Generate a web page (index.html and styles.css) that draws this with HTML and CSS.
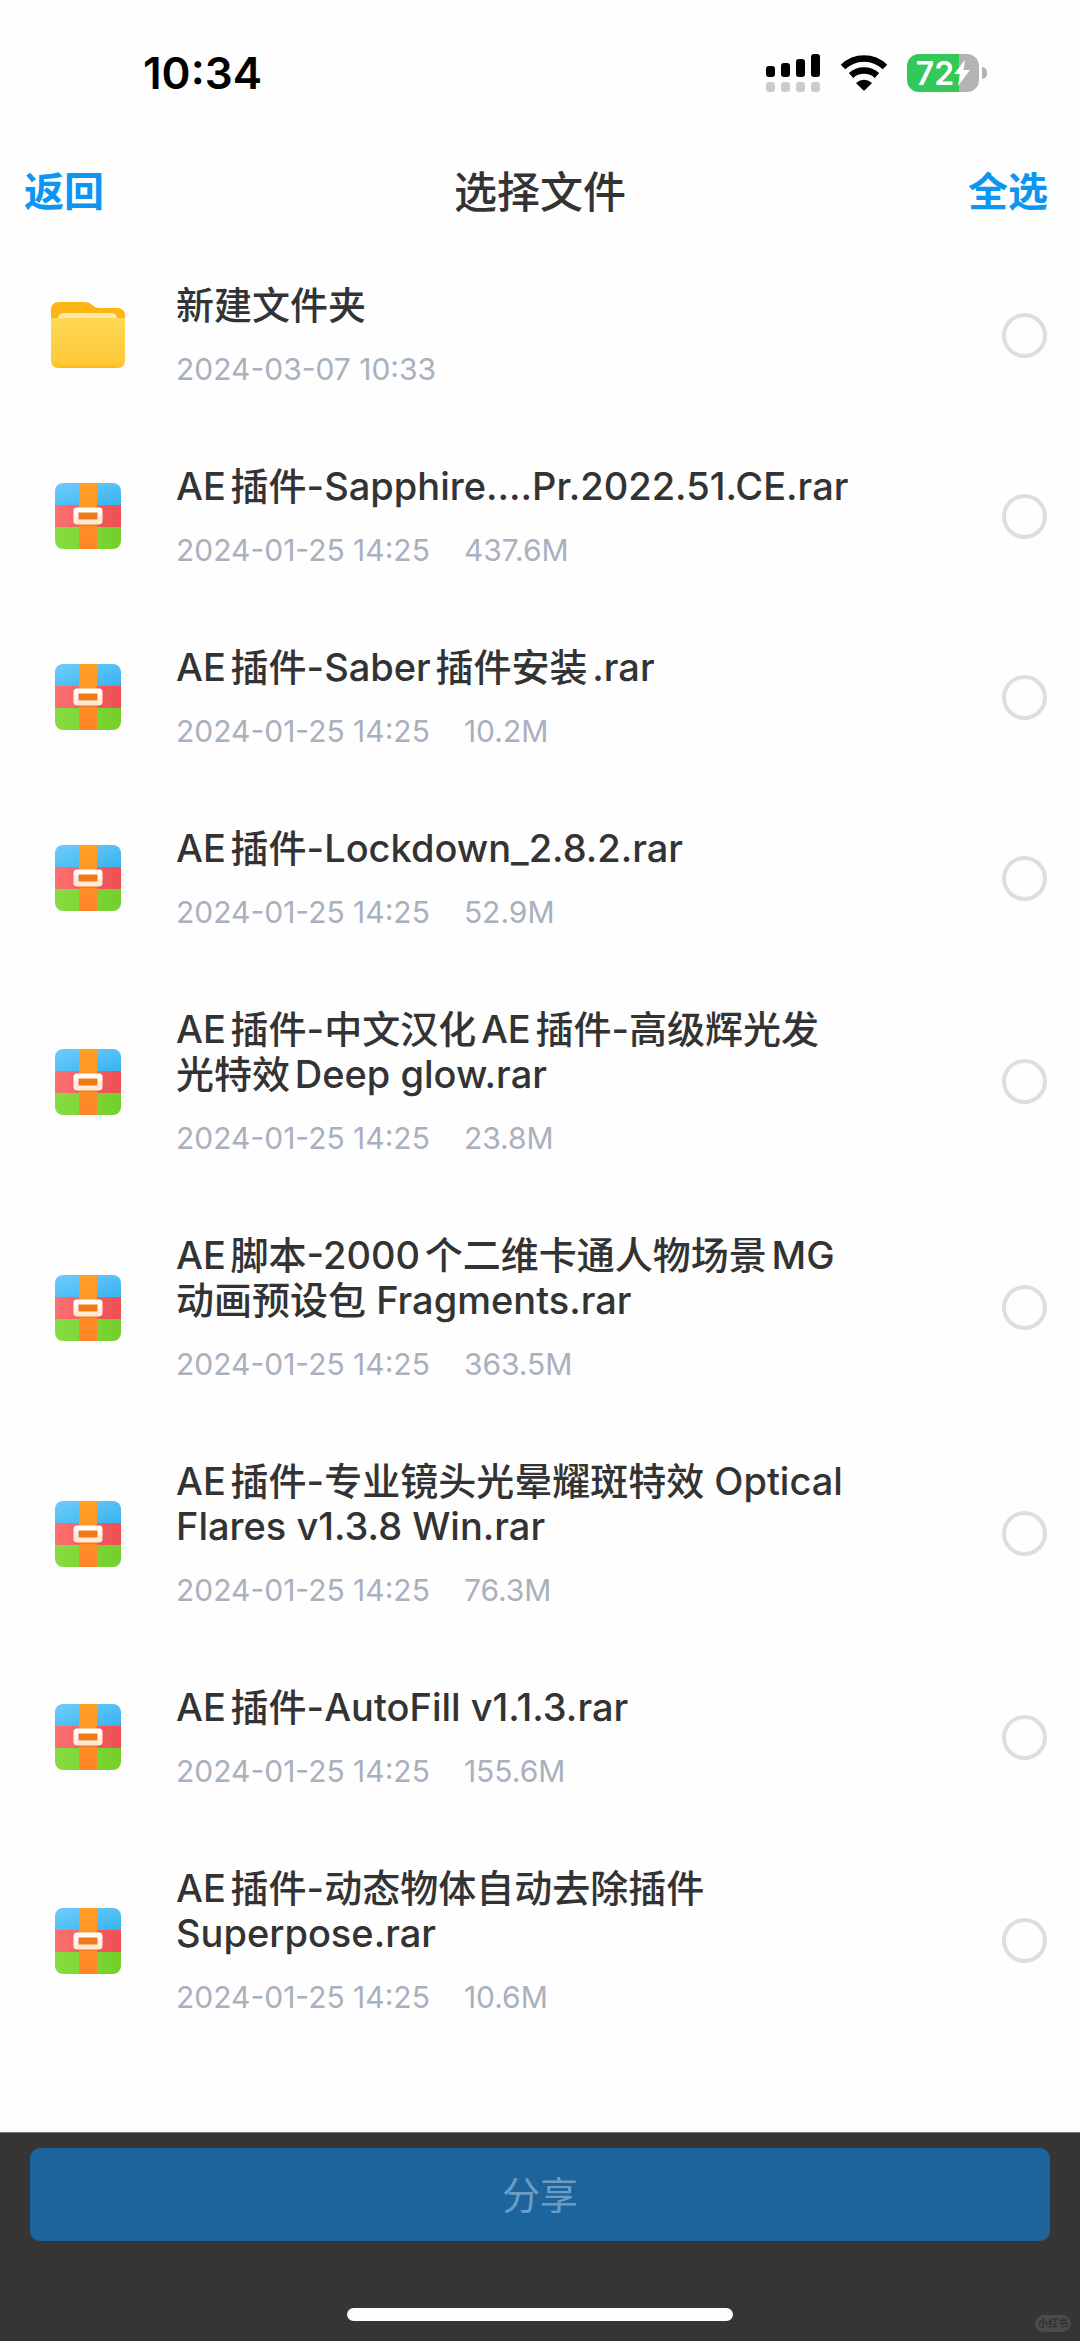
FILE: index.html
```
<!DOCTYPE html>
<html lang="zh-CN">
<head>
    <meta charset="UTF-8">
    <meta name="viewport" content="width=device-width, initial-scale=1.0">
    <title>选择文件</title>
    <link rel="stylesheet" href="styles.css">
</head>
<body>
    <!-- Shared icon shapes -->
    <svg class="sprite" aria-hidden="true">
        <defs>
            <linearGradient id="sky" x1="0" y1="0" x2="1" y2="1">
                <stop offset="0" stop-color="#6fcdfb"/>
                <stop offset="1" stop-color="#37b2ef"/>
            </linearGradient>
            <linearGradient id="red" x1="0" y1="0" x2="1" y2="0">
                <stop offset="0" stop-color="#fb7072"/>
                <stop offset="1" stop-color="#ee4f52"/>
            </linearGradient>
            <linearGradient id="green" x1="0" y1="0" x2="1" y2="0">
                <stop offset="0" stop-color="#86dc41"/>
                <stop offset="1" stop-color="#74cf2b"/>
            </linearGradient>
            <linearGradient id="belt" x1="0" y1="0" x2="0" y2="1">
                <stop offset="0" stop-color="#ffa024"/>
                <stop offset="1" stop-color="#ff8428"/>
            </linearGradient>
            <linearGradient id="buckle" x1="0" y1="0" x2="0" y2="1">
                <stop offset="0" stop-color="#ffffff"/>
                <stop offset="1" stop-color="#ffe9d2"/>
            </linearGradient>
            <linearGradient id="folderFront" x1="0" y1="0" x2="0" y2="1">
                <stop offset="0" stop-color="#ffd955"/>
                <stop offset="0.9" stop-color="#fec937"/>
                <stop offset="1" stop-color="#fbb913"/>
            </linearGradient>
            <clipPath id="zipShape">
                <rect width="66" height="66" rx="8"/>
            </clipPath>
        </defs>
        <symbol id="icon-zip" viewBox="0 0 66 66">
            <g clip-path="url(#zipShape)">
                <rect width="66" height="23" fill="url(#sky)"/>
                <rect y="22" width="66" height="22" fill="url(#red)"/>
                <rect y="44" width="66" height="22" fill="url(#green)"/>
                <rect x="24" width="18" height="66" fill="url(#belt)"/>
            </g>
            <rect x="19" y="26" width="29" height="17" rx="2" fill="#b84a20" opacity="0.25"/>
            <rect x="24" y="28" width="19" height="10" fill="#f07b16"/>
            <rect x="21" y="27" width="24" height="12" rx="1" fill="none" stroke="url(#buckle)" stroke-width="5"/>
        </symbol>
        <symbol id="icon-folder" viewBox="0 0 76 66">
            <path d="M1 18V8q0-8 8-8h26q4 0 6 2l4 3q2 1 5 1h17q8 0 8 8v4z" fill="#fdb515"/>
            <path d="M8 20v-3q0-6 6-6h48q5 0 5 6v3z" fill="#ffe9a8"/>
            <path d="M1 16h74v42q0 8-8 8H9q-8 0-8-8z" fill="url(#folderFront)"/>
        </symbol>
    </svg>

    <div class="page">
        <div class="status-bar">
            <span class="time">10:34</span>
            <div class="status-icons">
                <svg class="signal" width="55" height="38" viewBox="0 0 55 38" aria-hidden="true">
                    <g fill="#000">
                        <rect x="0" y="12" width="9" height="11" rx="3"/>
                        <rect x="15" y="9" width="9" height="14" rx="3"/>
                        <rect x="30" y="5" width="9" height="18" rx="3"/>
                        <rect x="45" y="0" width="9" height="23" rx="3"/>
                    </g>
                    <g fill="#cbcbcb">
                        <rect x="0" y="28" width="9" height="10" rx="3"/>
                        <rect x="15" y="28" width="9" height="10" rx="3"/>
                        <rect x="30" y="28" width="9" height="10" rx="3"/>
                        <rect x="45" y="28" width="9" height="10" rx="3"/>
                    </g>
                </svg>
                <svg class="wifi" width="48" height="36" viewBox="0 0 48 36" aria-hidden="true">
                    <path d="M3 12Q12 3.500 24 3.500T45 12" fill="none" stroke="#000" stroke-width="6.500"/>
                    <path d="M11 20.500Q16.500 15.500 24 15.500T37 20.500" fill="none" stroke="#000" stroke-width="6.500"/>
                    <path d="M16 28Q24 21.500 32 28L25 35Q24 36 23 35z" fill="#000"/>
                </svg>
                <div class="battery">
                    <span class="level">72</span>
                    <svg class="bolt" width="16" height="26" viewBox="0 0 16 26" aria-hidden="true">
                        <path d="M11 0 0 14h6L4 26 16 10H9.500z" fill="#fff"/>
                    </svg>
                </div>
            </div>
        </div>

        <header class="nav-bar">
            <a href="#" class="nav-link">返回</a>
            <h1>选择文件</h1>
            <a href="#" class="nav-link select-all">全选</a>
        </header>

        <ul class="file-list">
            <li class="file">
                <svg class="file-icon folder" aria-hidden="true"><use href="#icon-folder"/></svg>
                <label class="file-info" for="file1">
                    <span class="file-name">新建文件夹</span>
                    <span class="file-meta"><span>2024-03-07 10:33</span></span>
                </label>
                <input type="checkbox" id="file1">
            </li>
            <li class="file">
                <svg class="file-icon" aria-hidden="true"><use href="#icon-zip"/></svg>
                <label class="file-info" for="file2">
                    <span class="file-name">AE插件-Sapphire....Pr.2022.51.CE.rar</span>
                    <span class="file-meta"><span>2024-01-25 14:25</span><span>437.6M</span></span>
                </label>
                <input type="checkbox" id="file2">
            </li>
            <li class="file">
                <svg class="file-icon" aria-hidden="true"><use href="#icon-zip"/></svg>
                <label class="file-info" for="file3">
                    <span class="file-name">AE插件-Saber插件安装.rar</span>
                    <span class="file-meta"><span>2024-01-25 14:25</span><span>10.2M</span></span>
                </label>
                <input type="checkbox" id="file3">
            </li>
            <li class="file">
                <svg class="file-icon" aria-hidden="true"><use href="#icon-zip"/></svg>
                <label class="file-info" for="file4">
                    <span class="file-name">AE插件-Lockdown_2.8.2.rar</span>
                    <span class="file-meta"><span>2024-01-25 14:25</span><span>52.9M</span></span>
                </label>
                <input type="checkbox" id="file4">
            </li>
            <li class="file">
                <svg class="file-icon" aria-hidden="true"><use href="#icon-zip"/></svg>
                <label class="file-info" for="file5">
                    <span class="file-name">AE插件-中文汉化AE插件-高级辉光发光特效Deep glow.rar</span>
                    <span class="file-meta"><span>2024-01-25 14:25</span><span>23.8M</span></span>
                </label>
                <input type="checkbox" id="file5">
            </li>
            <li class="file">
                <svg class="file-icon" aria-hidden="true"><use href="#icon-zip"/></svg>
                <label class="file-info" for="file6">
                    <span class="file-name">AE脚本-2000个二维卡通人物场景MG动画预设包 Fragments.rar</span>
                    <span class="file-meta"><span>2024-01-25 14:25</span><span>363.5M</span></span>
                </label>
                <input type="checkbox" id="file6">
            </li>
            <li class="file">
                <svg class="file-icon" aria-hidden="true"><use href="#icon-zip"/></svg>
                <label class="file-info" for="file7">
                    <span class="file-name">AE插件-专业镜头光晕耀斑特效 Optical Flares v1.3.8 Win.rar</span>
                    <span class="file-meta"><span>2024-01-25 14:25</span><span>76.3M</span></span>
                </label>
                <input type="checkbox" id="file7">
            </li>
            <li class="file">
                <svg class="file-icon" aria-hidden="true"><use href="#icon-zip"/></svg>
                <label class="file-info" for="file8">
                    <span class="file-name">AE插件-AutoFill v1.1.3.rar</span>
                    <span class="file-meta"><span>2024-01-25 14:25</span><span>155.6M</span></span>
                </label>
                <input type="checkbox" id="file8">
            </li>
            <li class="file">
                <svg class="file-icon" aria-hidden="true"><use href="#icon-zip"/></svg>
                <label class="file-info" for="file9">
                    <span class="file-name">AE插件-动态物体自动去除插件Superpose.rar</span>
                    <span class="file-meta"><span>2024-01-25 14:25</span><span>10.6M</span></span>
                </label>
                <input type="checkbox" id="file9">
            </li>
        </ul>

        <footer class="bottom-bar">
            <button type="button" class="share-button" disabled>分享</button>
            <div class="home-indicator"></div>
            <span class="watermark">小红书</span>
        </footer>
    </div>
</body>
</html>
```
FILE: styles.css
```
/* General styles */
* {
    box-sizing: border-box;
}

body {
    margin: 0;
    font-family: Inter, "Noto Sans CJK SC", sans-serif;
    background-color: #fefefe;
    color: #333;
}

.sprite {
    position: absolute;
    width: 0;
    height: 0;
}

.page {
    display: flex;
    flex-direction: column;
    min-height: 100vh;
}

/* Status bar */
.status-bar {
    display: flex;
    justify-content: space-between;
    align-items: center;
    height: 146px;
    padding: 0 93px 0 143px;
    color: #000;
}

.time {
    font-size: 44px;
    font-weight: 600;
}

.status-icons {
    display: flex;
    align-items: center;
    gap: 19px;
}

.battery {
    position: relative;
    display: flex;
    align-items: center;
    justify-content: center;
    width: 72px;
    height: 38px;
    margin-right: 8px;
    border-radius: 12px;
    background: linear-gradient(to right, #34c759 72%, #b3b3b3 72%);
    color: #fff;
}

.battery::after {
    content: "";
    position: absolute;
    left: 75px;
    top: 13px;
    width: 5px;
    height: 12px;
    border-radius: 0 6px 6px 0;
    background-color: #b3b3b3;
}

.level {
    font-size: 32px;
    font-weight: 600;
}

/* Title bar */
.nav-bar {
    display: grid;
    grid-template-columns: 1fr auto 1fr;
    align-items: center;
    height: 86px;
    margin-bottom: 13px;
    padding: 0 24px;
}

.nav-bar h1 {
    margin: 0;
    font-size: 43px;
    font-weight: 500;
}

.nav-link {
    justify-self: start;
    color: #0d95f2;
    font-size: 40px;
    font-weight: 600;
    text-decoration: none;
}

.select-all {
    justify-self: end;
    margin-right: 8px;
}

/* File list */
.file-list {
    margin: 0;
    padding: 0;
    list-style: none;
}

.file {
    display: flex;
    align-items: center;
    padding: 38px 33px 39px 50px;
}

.file-icon {
    flex: none;
    width: 76px;
    height: 66px;
    margin-right: 50px;
}

.file-info {
    flex: 1;
    padding-right: 150px;
}

.file-name {
    display: block;
    font-size: 38px;
    font-weight: 500;
    line-height: 45px;
    text-autospace: normal;
}

.file-meta {
    display: flex;
    gap: 34px;
    margin-top: 23px;
    color: #a9b0be;
    font-size: 30px;
    line-height: 36px;
}

.file input {
    flex: none;
    appearance: none;
    width: 45px;
    height: 45px;
    margin: 0;
    border: 4px solid #dedede;
    border-radius: 50%;
}

.file input:checked {
    border-color: #0d95f2;
    background-color: #0d95f2;
}

/* Bottom bar */
.bottom-bar {
    position: relative;
    margin-top: auto;
    padding: 15px 30px 20px;
    border-top: 1px solid #777;
    background-color: #353535;
}

.share-button {
    display: block;
    width: 100%;
    height: 93px;
    padding: 0 0 4px;
    border: none;
    border-radius: 10px;
    background-color: #1d649c;
    color: #6b9dc4;
    font-family: inherit;
    font-size: 38px;
}

.home-indicator {
    width: 386px;
    height: 13px;
    margin: 67px auto 0;
    border-radius: 7px;
    background-color: #fdfdfd;
}

.watermark {
    position: absolute;
    right: 9px;
    bottom: 9px;
    padding: 0 3px;
    border-radius: 9px;
    background-color: #4b4b4b;
    color: #303030;
    font-size: 10px;
    font-weight: 700;
    line-height: 17px;
}
```
